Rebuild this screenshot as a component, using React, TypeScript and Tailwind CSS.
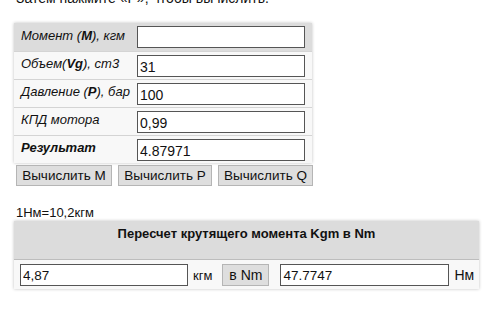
import React from "react";

const rows = [
  { label: <>Момент (<b>М</b>), кгм</>, value: "", bg: "bg-[#dcdcdc]" },
  { label: <>Объем(<b>Vg</b>), cm3</>, value: "31", bg: "bg-[#f8f8f8]" },
  { label: <>Давление (<b>Р</b>), бар</>, value: "100", bg: "bg-[#f8f8f8]" },
  { label: <>КПД мотора</>, value: "0,99", bg: "bg-[#f8f8f8]" },
  { label: <b>Результат</b>, value: "4.87971", bg: "bg-[#f8f8f8]" },
];

export default function App() {
  return (
    <div className="min-h-[311px] bg-white pl-[14px] text-[#111] font-['Liberation_Sans',Arial,sans-serif]">
      <p className="-mt-[10px] pl-[2px] text-[14px] leading-4">Затем нажмите «P», чтобы вычислить.</p>

      <div className="mt-[17px] w-[298px] shadow-[0_0_3px_rgba(0,0,0,0.25)]">
        {rows.map((r, i) => (
          <div key={i} className={`flex h-[28px] items-center ${r.bg} ${i > 0 ? "border-t border-[#d4d4d4]" : ""}`}>
            <div className="w-[123px] shrink-0 whitespace-nowrap pl-[7px] text-[13px] italic leading-4 -mt-[3px]">{r.label}</div>
            <input
              readOnly
              value={r.value}
              className="h-[22px] w-[168px] border border-[#555] bg-white px-[2px] pt-[3px] text-[14px] leading-4 outline-none"
            />
          </div>
        ))}
      </div>

      <div className="mt-[2px] flex gap-[6px] pl-[2px]">
        {[
          ["Вычислить М", "w-[96px]"],
          ["Вычислить P", "w-[94px]"],
          ["Вычислить Q", "w-[95px]"],
        ].map(([t, w]) => (
          <button key={t} className={`h-[21px] ${w} border border-[#b5b5b5] bg-[#dedede] text-[13.5px] leading-4 text-[#111]`}>
            {t}
          </button>
        ))}
      </div>

      <p className="mt-[20px] pl-[2px] text-[13px] leading-[14px]">1Нм=10,2кгм</p>

      <div className="mt-px w-[465px] shadow-[0_0_3px_rgba(0,0,0,0.25)]">
        <div className="h-[39px] border-b border-[#bdbdbd] bg-[#dcdcdc] pt-[5px] text-center text-[13px] font-bold leading-4">
          Пересчет крутящего момента Kgm в Nm
        </div>
        <div className="flex h-[29px] items-center bg-[#f8f8f8] pl-[6px] text-[13px]">
          <input readOnly value="4,87" className="h-[22px] w-[168px] border border-[#555] bg-white px-[2px] pt-[2px] text-[13.5px] leading-4 outline-none" />
          <span className="ml-[5px] pt-[2px]">кгм</span>
          <button className="ml-[10px] h-[22px] w-[47px] border border-[#b5b5b5] bg-[#dedede] text-[14px] leading-4">в Nm</button>
          <input readOnly value="47.7747" className="ml-[11px] h-[22px] w-[169px] border border-[#555] bg-white px-[2px] pt-[2px] text-[13.5px] leading-4 outline-none" />
          <span className="ml-[5px] pt-[2px] text-[14px]">Нм</span>
        </div>
      </div>
    </div>
  );
}
